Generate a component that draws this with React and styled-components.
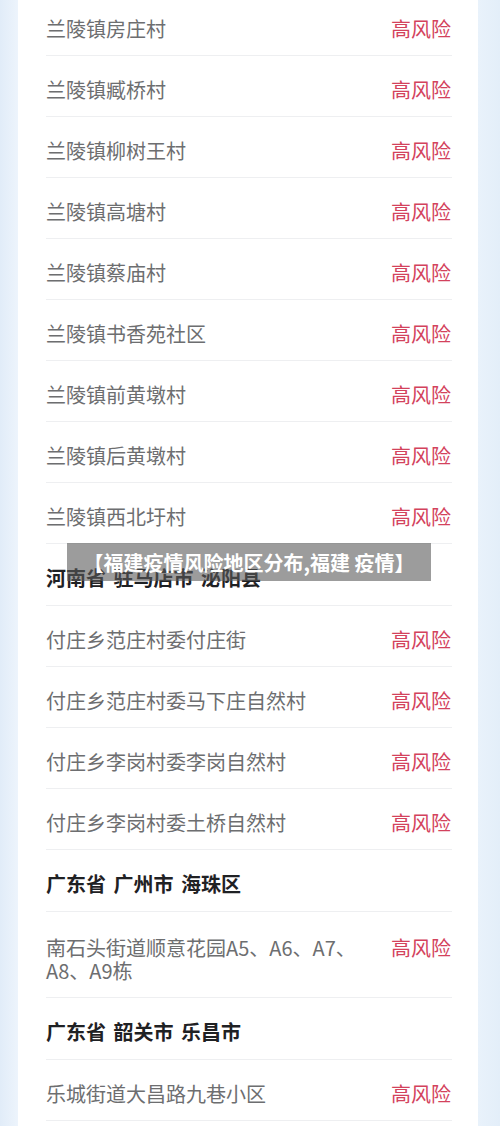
import React from 'react';
import styled, { createGlobalStyle } from 'styled-components';

const GlobalStyle = createGlobalStyle`
  html, body {
    margin: 0;
    padding: 0;
    background: #e5eff9;
  }
  body {
    font-family: "Noto Sans CJK SC", "Noto Sans", sans-serif;
  }
`;

const Page = styled.div`
  position: relative;
  width: 500px;
  height: 1126px;
  overflow: hidden;
  background: linear-gradient(90deg, #e1ecf8 0%, #edf4fc 18px, #e9f2fb 478px, #e3eef9 100%);
  padding: 0 22px 0 18px;
  box-sizing: border-box;
`;

const Card = styled.div`
  background: #ffffff;
  margin-top: -5px;
  padding: 0 26px 0 28px;
  min-height: 1140px;
`;

const Row = styled.div`
  display: flex;
  justify-content: space-between;
  align-items: ${(p) => (p.$multi ? 'flex-start' : 'center')};
  height: ${(p) => (p.$multi ? '86px' : p.$head ? '62px' : '61px')};
  padding-top: ${(p) => (p.$multi ? '24px' : '6px')};
  box-sizing: border-box;
  border-bottom: 1px solid #eeeff1;
`;

const Place = styled.div`
  font-size: 20px;
  line-height: 23px;
  color: #6d6e70;
  max-width: 310px;
`;

const Heading = styled.div`
  font-size: 20px;
  font-weight: 700;
  color: #1f2124;
  word-spacing: 3px;
`;

const Risk = styled.div`
  font-size: 20px;
  line-height: 23px;
  color: #d3425c;
  flex-shrink: 0;
  margin-right: 1px;
`;

const Caption = styled.div`
  position: absolute;
  left: 67px;
  top: 543px;
  width: 364px;
  height: 38px;
  background: rgba(90, 90, 90, 0.6);
  color: #ffffff;
  font-size: 20px;
  font-weight: 700;
  display: flex;
  align-items: center;
  justify-content: center;
`;

const items = [
  { t: 'place', name: '兰陵镇房庄村' },
  { t: 'place', name: '兰陵镇臧桥村' },
  { t: 'place', name: '兰陵镇柳树王村' },
  { t: 'place', name: '兰陵镇高塘村' },
  { t: 'place', name: '兰陵镇蔡庙村' },
  { t: 'place', name: '兰陵镇书香苑社区' },
  { t: 'place', name: '兰陵镇前黄墩村' },
  { t: 'place', name: '兰陵镇后黄墩村' },
  { t: 'place', name: '兰陵镇西北圩村' },
  { t: 'head', name: '河南省 驻马店市 泌阳县' },
  { t: 'place', name: '付庄乡范庄村委付庄街' },
  { t: 'place', name: '付庄乡范庄村委马下庄自然村' },
  { t: 'place', name: '付庄乡李岗村委李岗自然村' },
  { t: 'place', name: '付庄乡李岗村委土桥自然村' },
  { t: 'head', name: '广东省 广州市 海珠区' },
  { t: 'multi', name: '南石头街道顺意花园A5、A6、A7、A8、A9栋' },
  { t: 'head', name: '广东省 韶关市 乐昌市' },
  { t: 'place', name: '乐城街道大昌路九巷小区' },
];

export default function App() {
  return (
    <Page>
      <GlobalStyle />
      <Card>
        {items.map((it, i) =>
          it.t === 'head' ? (
            <Row key={i} $head>
              <Heading>{it.name}</Heading>
            </Row>
          ) : (
            <Row key={i} $multi={it.t === 'multi'}>
              <Place>{it.name}</Place>
              <Risk>高风险</Risk>
            </Row>
          )
        )}
      </Card>
      <Caption>【福建疫情风险地区分布,福建 疫情】</Caption>
    </Page>
  );
}
